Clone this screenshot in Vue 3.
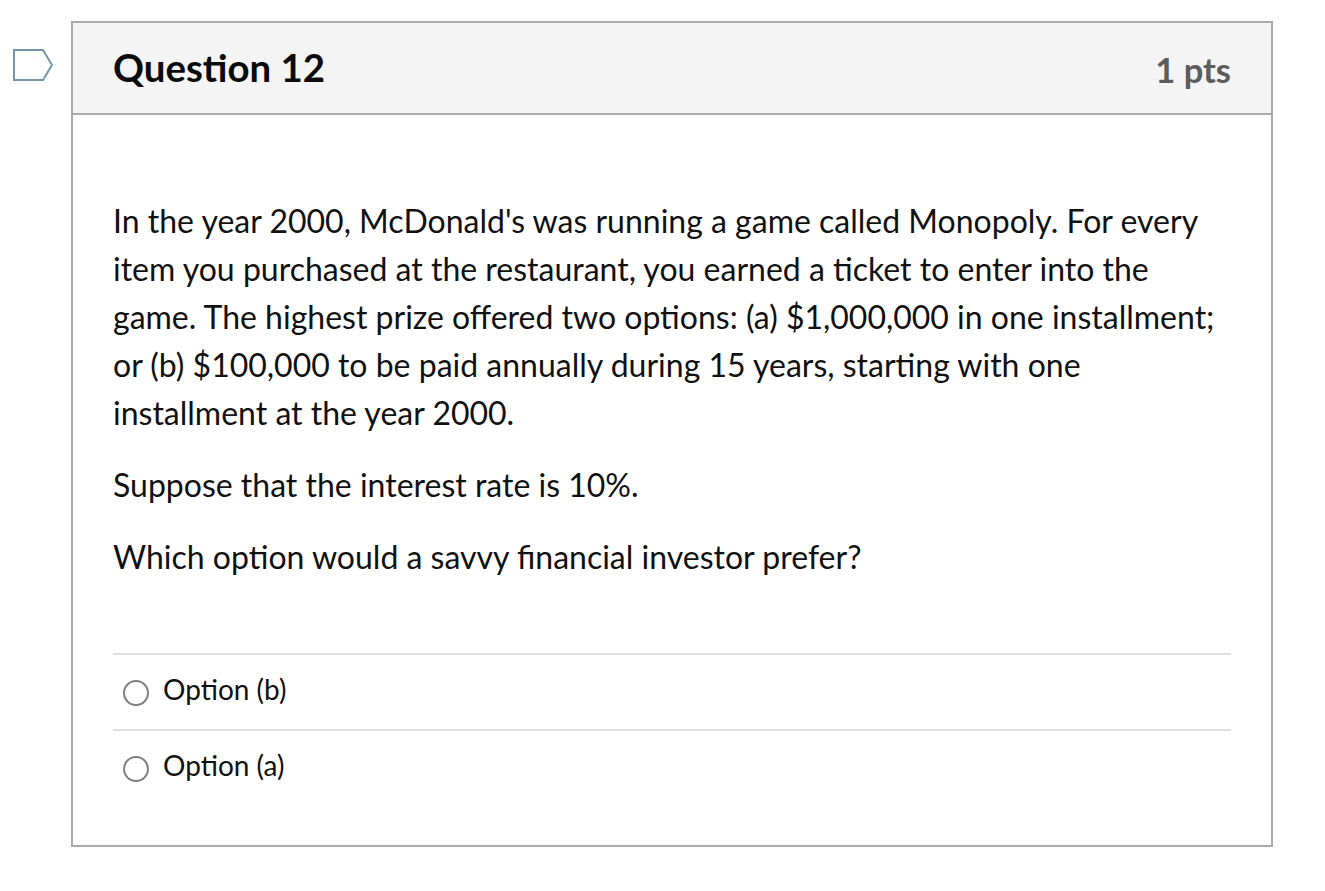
<script setup>
import { ref } from 'vue'

const options = ref(['Option (b)', 'Option (a)'])
const selected = ref(null)
</script>

<template>
  <div class="page">
    <svg class="flag" width="40" height="32" viewBox="0 0 40 32">
      <path d="M1 1 H30 L39 16 L30 31 H1 Z" fill="#fff" stroke="#7496ad" stroke-width="2" />
    </svg>

    <div class="question">
      <div class="question-header">
        <h2>Question 12</h2>
        <span class="pts">1 pts</span>
      </div>

      <div class="question-body">
        <div class="question-text">
          <p>In the year 2000, McDonald's was running a game called Monopoly. For every item you purchased at the restaurant, you earned a ticket to enter into the game. The highest prize offered two options: (a) $1,000,000 in one installment; or (b) $100,000 to be paid annually during 15 years, starting with one installment at the year 2000.</p>
          <p>Suppose that the interest rate is 10%.</p>
          <p>Which option would a savvy financial investor prefer?</p>
        </div>

        <div class="answers">
          <label v-for="opt in options" :key="opt" class="answer">
            <input v-model="selected" type="radio" name="q12" :value="opt" />
            <span>{{ opt }}</span>
          </label>
        </div>
      </div>
    </div>
  </div>
</template>

<style>
body {
  background: #fff;
}
</style>

<style scoped>
.page {
  display: flex;
  align-items: flex-start;
  gap: 18px;
  padding: 21px 0 0 13px;
  font-family: Lato, "Open Sans", sans-serif;
  color: #111;
}

.flag {
  flex: none;
  margin-top: 28px;
}

.question {
  width: 1202px;
  box-sizing: border-box;
  border: 2px solid #aaa;
}

.question-header {
  display: flex;
  justify-content: space-between;
  align-items: center;
  height: 92px;
  box-sizing: border-box;
  padding: 0 40px;
  background: #f4f4f4;
  border-bottom: 2px solid #aaa;
}

.question-header h2 {
  margin: -2px 0 0;
  font-size: 38.4px;
  font-weight: 700;
  color: #0b0b0b;
}

.pts {
  font-size: 34.5px;
  font-weight: 700;
  color: #5c5c5c;
  margin-top: 2px;
}

.question-body {
  padding: 82px 40px 40px;
}

.question-text {
  font-size: 32px;
  line-height: 48px;
}

.question-text p {
  margin: 0 0 24px;
}

.answers {
  margin-top: 72px;
}

.answer {
  display: flex;
  align-items: center;
  gap: 14px;
  height: 76px;
  box-sizing: border-box;
  border-top: 2px solid #ddd;
  padding-left: 10px;
  padding-bottom: 6px;
  font-size: 28px;
}

.answer input {
  appearance: none;
  width: 26px;
  height: 26px;
  margin: 8px 0 0;
  border: 2px solid #808080;
  border-radius: 50%;
  background: #fff;
}
</style>
